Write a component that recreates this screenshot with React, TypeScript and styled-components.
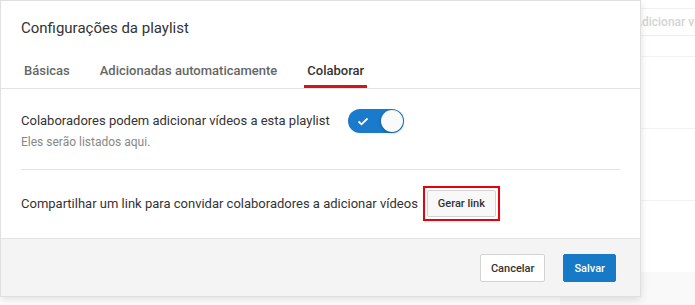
import React from 'react';
import styled, { createGlobalStyle } from 'styled-components';

const GlobalStyle = createGlobalStyle`
  html, body { margin: 0; padding: 0; background: #fff; }
  body { font-family: Roboto, "Noto Sans", Arial, sans-serif; -webkit-font-smoothing: antialiased; }
  * { box-sizing: border-box; }
`;

const Page = styled.div`
  position: relative;
  width: 695px;
  height: 305px;
  overflow: hidden;
  background: #fff;
`;

const BgPanel = styled.div`
  margin-left: 560px;
  padding-top: 8px;
  height: 100%;
  display: flex;
  flex-direction: column;
`;

const BgToolbar = styled.div`
  height: 28px;
  border-top: 1px solid #f1f1f1;
  border-bottom: 1px solid #ededed;
  display: flex;
  align-items: center;
  padding-left: 74px;
  font-size: 12px;
  font-weight: 500;
  color: #d4d4d4;
  white-space: nowrap;
  overflow: hidden;
`;

const BgRow = styled.div<{ $first?: boolean }>`
  height: 72px;
  flex: none;
  border-top: 1px solid #f3f3f3;
  margin-top: ${(p) => (p.$first ? '20px' : '0')};
`;

const BgFooter = styled.div`
  flex: 1;
  background: #f9f9f9;
`;

const Dialog = styled.div`
  position: absolute;
  top: 0;
  left: 0;
  width: 641px;
  height: 297px;
  background: #fff;
  border: 1px solid #e0e0e0;
  box-shadow: 0 3px 8px rgba(0, 0, 0, 0.12);
  display: flex;
  flex-direction: column;
`;

const Header = styled.div`
  padding: 17px 20px 0;
`;

const Title = styled.h2`
  margin: 0;
  font-size: 15px;
  line-height: 20px;
  font-weight: 400;
  color: #333;
`;

const TabBar = styled.div`
  margin-top: 23px;
  display: flex;
  gap: 24px;
  padding: 0 20px;
  border-bottom: 1px solid #e2e2e2;
`;

const Tab = styled.div<{ $active?: boolean }>`
  padding: 0 3px 4px;
  font-size: 13px;
  line-height: 20px;
  font-weight: 500;
  color: ${(p) => (p.$active ? '#333' : '#666')};
  border-bottom: 3px solid ${(p) => (p.$active ? '#cc181e' : 'transparent')};
  white-space: nowrap;
`;

const Content = styled.div`
  padding: 20px 20px 17px;
`;

const SettingRow = styled.div`
  display: flex;
  align-items: flex-start;
  gap: 18px;
`;

const SettingText = styled.div`
  display: flex;
  flex-direction: column;
`;

const Primary = styled.div`
  font-size: 13px;
  line-height: 24px;
  color: #333;
  white-space: nowrap;
`;

const Secondary = styled.div`
  font-size: 12px;
  line-height: 18px;
  color: #888;
`;

const Toggle = styled.div`
  width: 56px;
  height: 24px;
  border-radius: 12px;
  background: #1a7acb;
  display: flex;
  align-items: center;
  justify-content: space-between;
  padding: 0 1px 0 9px;
  flex: none;
`;

const Knob = styled.div`
  width: 22px;
  height: 22px;
  border-radius: 50%;
  background: #fafafa;
  box-shadow: 0 1px 3px rgba(0, 0, 0, 0.35);
`;

const Divider = styled.hr`
  margin: 18px 0 0;
  border: 0;
  border-top: 1px solid #e2e2e2;
`;

const LinkRow = styled.div`
  padding-top: 16px;
  display: flex;
  align-items: center;
  gap: 5px;
`;

const Highlight = styled.div`
  border: 2px solid #e8000b;
  padding: 2px;
  display: flex;
`;

const Button = styled.button<{ $primary?: boolean }>`
  height: 27px;
  padding: 0 10px;
  font-family: Roboto, "Noto Sans", Arial, sans-serif;
  font-size: 11px;
  font-weight: 500;
  border-radius: 2px;
  cursor: pointer;
  color: ${(p) => (p.$primary ? '#fff' : '#333')};
  background: ${(p) => (p.$primary ? '#167ac6' : '#f8f8f8')};
  border: 1px solid ${(p) => (p.$primary ? '#167ac6' : '#d3d3d3')};
`;

const FooterButton = styled(Button)`
  height: 28px;
  background: ${(p) => (p.$primary ? '#167ac6' : '#fff')};
`;

const Footer = styled.div`
  margin-top: auto;
  border-top: 1px solid #e2e2e2;
  background: #f4f4f4;
  padding: 15px 24px 0;
  height: 58px;
  display: flex;
  justify-content: flex-end;
  align-items: flex-start;
  gap: 18px;
`;

export default function App() {
  return (
    <>
      <GlobalStyle />
      <Page>
        <BgPanel>
          <BgToolbar>Adicionar vídeos</BgToolbar>
          <BgRow $first />
          <BgRow />
          <BgRow />
          <BgFooter />
        </BgPanel>
        <Dialog>
          <Header>
            <Title>Configurações da playlist</Title>
          </Header>
          <TabBar>
            <Tab>Básicas</Tab>
            <Tab>Adicionadas automaticamente</Tab>
            <Tab $active>Colaborar</Tab>
          </TabBar>
          <Content>
            <SettingRow>
              <SettingText>
                <Primary>Colaboradores podem adicionar vídeos a esta playlist</Primary>
                <Secondary>Eles serão listados aqui.</Secondary>
              </SettingText>
              <Toggle>
                <svg width="12" height="9" viewBox="0 0 12 9" fill="none">
                  <path d="M1.5 4.5 L4.5 7.3 L10.5 1.5" stroke="#fff" strokeWidth="1.8" />
                </svg>
                <Knob />
              </Toggle>
            </SettingRow>
            <Divider />
            <LinkRow>
              <Primary>Compartilhar um link para convidar colaboradores a adicionar vídeos</Primary>
              <Highlight>
                <Button>Gerar link</Button>
              </Highlight>
            </LinkRow>
          </Content>
          <Footer>
            <FooterButton>Cancelar</FooterButton>
            <FooterButton $primary>Salvar</FooterButton>
          </Footer>
        </Dialog>
      </Page>
    </>
  );
}
